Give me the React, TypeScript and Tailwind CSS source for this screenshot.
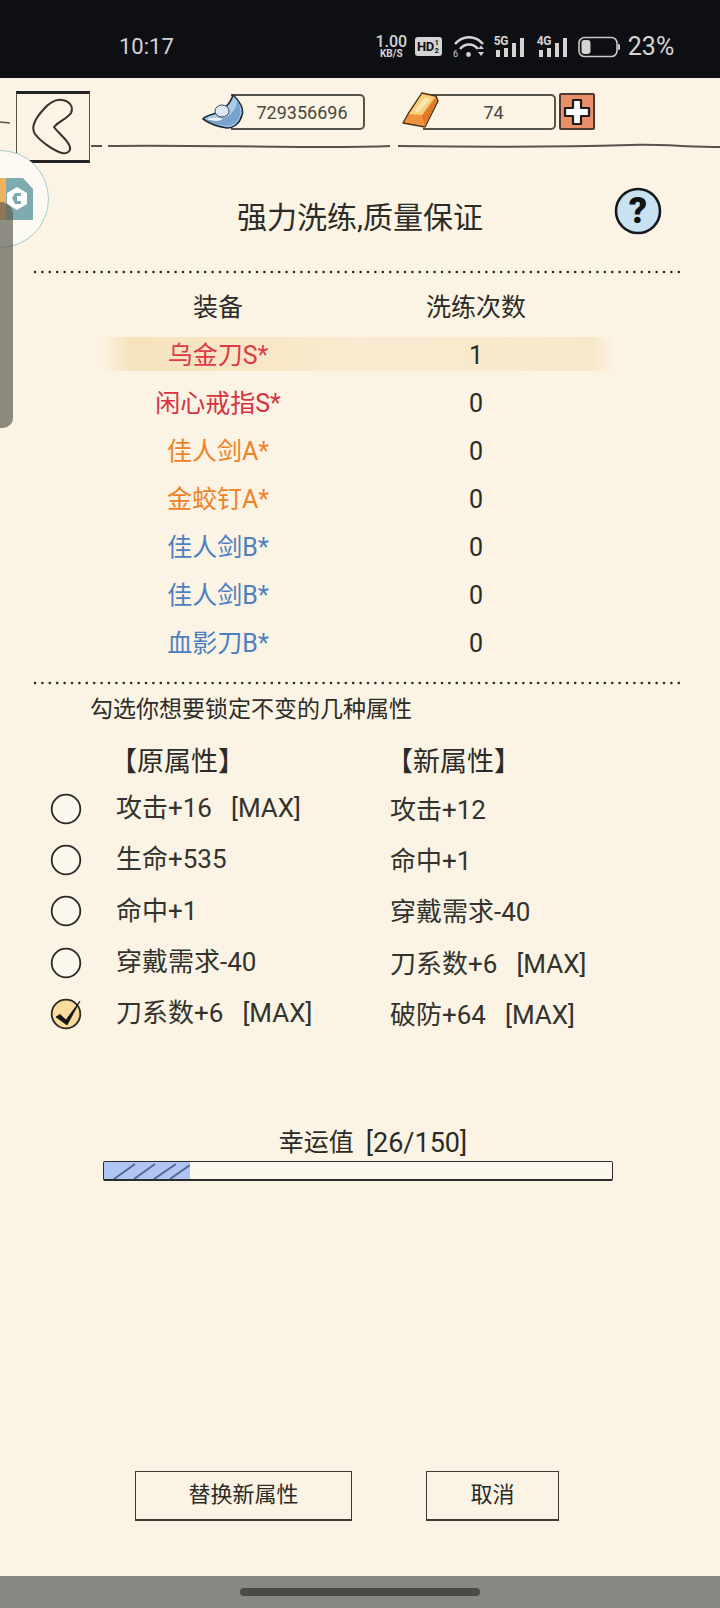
const FONT = "font-['Roboto','Noto_Sans_CJK_SC',sans-serif]";

const EQUIPMENT = [
  { name: "乌金刀S*", count: 1, color: "text-[#dc3a48]", active: true },
  { name: "闲心戒指S*", count: 0, color: "text-[#d8313f]" },
  { name: "佳人剑A*", count: 0, color: "text-[#ee8229]" },
  { name: "金蛟钉A*", count: 0, color: "text-[#ee8229]" },
  { name: "佳人剑B*", count: 0, color: "text-[#4d80bf]" },
  { name: "佳人剑B*", count: 0, color: "text-[#4d80bf]" },
  { name: "血影刀B*", count: 0, color: "text-[#4d80bf]" },
];

const ATTRS = [
  { oldText: "攻击+16", oldMax: true, newText: "攻击+12", newMax: false, checked: false },
  { oldText: "生命+535", oldMax: false, newText: "命中+1", newMax: false, checked: false },
  { oldText: "命中+1", oldMax: false, newText: "穿戴需求-40", newMax: false, checked: false },
  { oldText: "穿戴需求-40", oldMax: false, newText: "刀系数+6", newMax: true, checked: false },
  { oldText: "刀系数+6", oldMax: true, newText: "破防+64", newMax: true, checked: true },
];

function Signal({ label }: { label: string }) {
  return (
    <div className="relative w-[31px] h-[20px]">
      <span className="absolute left-0 top-[-2px] text-[12px] font-bold leading-[12px] tracking-[-0.5px] text-[#d4d4d4]">
        {label}
      </span>
      <svg width="31" height="20" viewBox="0 0 31 20" className="absolute left-0 top-0">
        <rect x="2" y="13" width="4" height="7" fill="#d4d4d4" />
        <rect x="10" y="11" width="4" height="9" fill="#d4d4d4" />
        <rect x="18" y="6" width="4" height="14" fill="#d4d4d4" />
        <rect x="26" y="1" width="4" height="19" fill="#d4d4d4" />
      </svg>
    </div>
  );
}

function StatusBar() {
  return (
    <div className="h-[78px] shrink-0 bg-[#0e0f13] flex items-center text-[#d4d4d4] pt-[15px]">
      <span className="ml-[119px] text-[22px] leading-none">10:17</span>
      <div className="ml-[202px] w-[31px] flex flex-col items-center">
        <span className="text-[16px] leading-[14px] font-medium">1.00</span>
        <span className="text-[10px] leading-[10px] font-bold">KB/S</span>
      </div>
      <div className="ml-[8px] w-[27px] h-[19px] rounded-[3px] bg-[#d4d4d4] flex items-center justify-center text-[#0e0f13] text-[13px] font-bold leading-none tracking-[-0.5px]">
        HD<span className="text-[7px] leading-[8px] w-[6px] text-center">1 2</span>
      </div>
      <svg width="32" height="22" viewBox="0 0 32 22" className="ml-[11px]" fill="none" stroke="#d4d4d4" strokeWidth="2.6">
        <path d="M2 8 C10 -1 22 -1 30 8" />
        <path d="M7 13 C12 7 20 7 25 13" />
        <circle cx="15.5" cy="18.5" r="2.4" fill="#d4d4d4" stroke="none" />
        <path d="M26 13 L29 9.5 L32 13 Z M26 16 L29 20 L32 16 Z" fill="#d4d4d4" stroke="none" transform="translate(-1 0)" />
        <text x="0" y="21" fontSize="9" fill="#d4d4d4" stroke="none">6</text>
      </svg>
      <div className="ml-[9px]"><Signal label="5G" /></div>
      <div className="ml-[12px]"><Signal label="4G" /></div>
      <svg width="42" height="22" viewBox="0 0 42 22" className="ml-[10px]" fill="none">
        <rect x="1" y="1.5" width="38" height="19" rx="5.5" stroke="#c9c9c9" strokeWidth="1.6" />
        <rect x="3.5" y="4" width="9" height="14" rx="3" fill="#d4d4d4" />
        <rect x="40" y="8" width="2" height="6" rx="1" fill="#c9c9c9" />
      </svg>
      <span className="ml-[8px] text-[25px] leading-none">23%</span>
    </div>
  );
}

function CurrencyPill({ value, className }: { value: string; className: string }) {
  return (
    <div className={`h-[36px] flex items-center justify-center border-y-2 border-r-2 border-[#55544c] rounded-r-[5px] text-[18px] text-[#47473f] pl-[10px] ${className}`}>
      {value}
    </div>
  );
}

function Header() {
  return (
    <div className="relative h-[92px] shrink-0">
      <svg width="720" height="92" viewBox="0 0 720 92" className="absolute left-0 top-0" fill="none" stroke="#55544c">
        <path d="M0 44 L10 45" strokeWidth="1.6" />
        <path d="M91 68 L102 68 M108 68 C180 67 250 69 320 69 C350 69 370 69 390 68 M398 68 C480 69 560 69 630 67 C660 66 690 69 720 69" strokeWidth="2" />
      </svg>
      <div className="relative flex items-start pt-[13px] pl-[16px]">
        <div className="relative w-[74px] h-[72px] border border-[#55544c] border-t-[3px] border-t-[#222] border-b-[3px] border-b-[#222] bg-[#fbf3e3]">
          <svg width="74" height="72" viewBox="0 0 74 72" className="absolute left-[-1px] top-[-3px]" fill="none" stroke="#33322d" strokeWidth="2">
            <path d="M27 19 C33 12 40 8 46 9 C53 10 58 15 55 22 C52 27 42 31 38 36 C42 42 52 49 54 56 C55 61 50 63 46 62 C38 60 24 50 19 43 C15 37 18 29 27 19Z" />
          </svg>
        </div>
        {/* silver ingot */}
        <div className="ml-[112px] mt-[3px] w-[164px] h-[36px] flex items-center relative">
          <svg width="42" height="38" viewBox="0 0 42 38" className="absolute left-0 top-[-1px] z-10">
            <path d="M31 2 C38 8 42 16 40 22 C38 30 32 35 25 35 C18 34 8 31 1 26 C3 23 9 22 14 20 C20 18 28 12 31 2Z" fill="#a9cbe8" stroke="#1f2a38" strokeWidth="1.6" strokeLinejoin="round" />
            <path d="M3 26 C10 24 16 24 22 25 C30 22 35 15 35 7 C38 12 39 18 38 22 C36 29 31 33 25 33 C17 32 9 30 3 26Z" fill="#78a3cd" />
            <path d="M4 26 C10 24 16 24 21 26 C17 29 10 28 4 26Z" fill="#eef4fa" />
            <ellipse cx="20" cy="18" rx="7" ry="6" fill="#dce9f4" stroke="#3a4a5a" strokeWidth="1" />
          </svg>
          <CurrencyPill value="729356696" className="ml-[29px] w-[134px]" />
        </div>
        {/* gold bar */}
        <div className="ml-[35px] mt-[3px] w-[155px] h-[36px] flex items-center relative">
          <svg width="40" height="38" viewBox="0 0 40 38" className="absolute left-[-1px] top-[-2px] z-10">
            <path d="M22 1 L36 4 L38 9 L25 35 L3 31 L8 22Z" fill="#f0923f" stroke="#4d3517" strokeWidth="1.4" strokeLinejoin="round" />
            <path d="M22 2 L35 5 L22 23 L9 22Z" fill="#f9cf7a" />
            <path d="M24 6 L30 7 L19 20 L14 19Z" fill="#fde6ad" />
            <path d="M36 6 L37 9 L25 34 L22 24Z" fill="#dd7a2a" />
          </svg>
          <CurrencyPill value="74" className="ml-[22px] w-[133px]" />
        </div>
        <div className="ml-[3px] mt-[2px] w-[36px] h-[37px] bg-[#e98f6b] border-2 border-[#4d3a30] rounded-[2px] flex items-center justify-center relative">
          <svg width="28" height="28" viewBox="0 0 28 28">
            <path d="M10 2 H18 V10 H26 V18 H18 V26 H10 V18 H2 V10 H10Z" fill="#fff" stroke="#1e1a18" strokeWidth="2.2" strokeLinejoin="round" />
          </svg>
        </div>
      </div>
    </div>
  );
}

function DottedLine({ className }: { className: string }) {
  return (
    <div className={`pl-[34px] ${className}`}>
      <svg width="650" height="4" viewBox="0 0 650 4" className="block">
        <line x1="1" y1="2" x2="649" y2="2" stroke="#2a2a26" strokeWidth="2.6" strokeLinecap="round" strokeDasharray="0 7.4" />
      </svg>
    </div>
  );
}

function Radio({ checked }: { checked: boolean }) {
  return (
    <svg width="34" height="34" viewBox="0 0 34 34" className="shrink-0 overflow-visible">
      <circle cx="17" cy="17" r="14.3" fill={checked ? "#f9dc9b" : "#fdf8ee"} stroke="#2a2a26" strokeWidth="1.8" />
      {checked && <path d="M7 20 L11 17.5 L17 23 L31 4 L18 28 Z" fill="#161616" stroke="#161616" strokeWidth="0.8" strokeLinejoin="round" />}
    </svg>
  );
}

function AttrText({ text, max }: { text: string; max: boolean }) {
  return (
    <span className="relative top-[1px] text-[26px] leading-none text-[#33332e] whitespace-pre">
      {text}
      {max && <span className="ml-[19px]">[MAX]</span>}
    </span>
  );
}

function FloatingBall() {
  return (
    <>
      <div className="absolute left-[-49px] top-[150px] w-[98px] h-[98px] rounded-full border-[1.5px] border-[#a2cdc8] bg-[#fdfaf4] flex items-center justify-end pr-[14px]">
        <svg width="36" height="44" viewBox="0 0 36 44">
          <path d="M8 1 L25 1 L35 12 L35 43 L8 43Z" fill="#7eabb0" />
          <path d="M0 1 L8 1 L8 43 L0 43Z" fill="#f0b45f" />
          <path d="M19 10 L29 16 L29 27 L19 33 L9 27 L9 16Z" fill="#fff" />
          <path d="M23 16 L17 16 L14 21 L17 27 L23 27 L23 24 L19 24 L19 19 L23 19Z" fill="#7eabb0" />
        </svg>
      </div>
      <div className="absolute left-0 top-[202px] w-[13px] h-[226px] bg-[#5f5d50]/70 rounded-tr-[12px] rounded-br-[10px]" />
    </>
  );
}

export default function App() {
  return (
    <div className={`${FONT} relative w-[720px] h-[1608px] overflow-hidden bg-[#fbf3e3] flex flex-col text-[#2b2b27]`}>
      <StatusBar />
      <Header />

      <div className="h-[96px] shrink-0 grid grid-cols-[1fr_auto_1fr] items-center">
        <div />
        <h1 className="text-[30px] leading-none font-normal">强力洗练,质量保证</h1>
        <div className="flex justify-end pr-[58px] pb-[14px]">
          <svg width="48" height="48" viewBox="0 0 48 48">
            <circle cx="24" cy="24" r="22" fill="#c9e2f1" stroke="#15191d" strokeWidth="2.6" />
            <text x="24" y="36" textAnchor="middle" fontSize="36" fontWeight="900" fontFamily="Roboto" fill="#111">?</text>
          </svg>
        </div>
      </div>

      <DottedLine className="h-[16px] pt-[4px] shrink-0" />

      <div className="ml-[100px] w-[516px] grid grid-cols-[236px_1fr] h-[48px] pt-[3px] items-center text-[25px] text-center shrink-0">
        <span>装备</span>
        <span>洗练次数</span>
      </div>

      {EQUIPMENT.map((item, i) => (
        <div key={i} className="h-[48px] flex items-center shrink-0">
          <div
            className={`ml-[100px] w-[516px] h-[34px] grid grid-cols-[236px_1fr] items-center text-center text-[25px] ${
              item.active ? "bg-[linear-gradient(90deg,transparent,#f6e2bc_6%,#f9ebd0_50%,#f8e8cb_95%,transparent)]" : ""
            }`}
          >
            <span className={item.color}>{item.name}</span>
            <span>{item.count}</span>
          </div>
        </div>
      ))}

      <DottedLine className="h-[32px] pt-[15px] shrink-0" />

      <div className="h-[24px] shrink-0 pl-[90px] flex items-center text-[23px] whitespace-nowrap">勾选你想要锁定不变的几种属性</div>

      <div className="mt-[20px] h-[36px] shrink-0 grid grid-cols-[276px_1fr] pl-[110px] items-center text-[27px]">
        <span>【原属性】</span>
        <span>【新属性】</span>
      </div>

      <div className="mt-[5px] shrink-0">
        {ATTRS.map((row) => (
          <div key={row.oldText} className="h-[51.3px] flex items-center pl-[49px]">
            <Radio checked={row.checked} />
            <div className="ml-[33px] w-[274px]">
              <AttrText text={row.oldText} max={row.oldMax} />
            </div>
            <AttrText text={row.newText} max={row.newMax} />
          </div>
        ))}
      </div>

      <div className="mt-[88.5px] h-[30px] shrink-0 flex items-center justify-center pl-[26px] text-[25px] whitespace-pre">
        幸运值<span className="ml-[12px] text-[27px]">[26/150]</span>
      </div>

      <div className="mt-[3px] ml-[103px] w-[510px] h-[20px] shrink-0 border-[1.5px] border-b-2 border-[#2b2b27] rounded-[2px] bg-[#fdf8ee] overflow-hidden">
        <svg width="86" height="17" viewBox="0 0 86 17" className="block">
          <rect width="86" height="17" fill="#afc5f5" />
          <path d="M10 17 L31 2 M30 17 L51 2 M50 17 L72 2 M66 17 L86 3" stroke="#566a8c" strokeWidth="2" />
        </svg>
      </div>

      <div className="mt-[290px] ml-[135px] shrink-0 flex gap-[74px]">
        <button type="button" className="w-[217px] h-[50px] border-[1.5px] border-b-2 border-[#3a3a35] text-[22px] leading-none">替换新属性</button>
        <button type="button" className="w-[133px] h-[50px] border-[1.5px] border-b-2 border-[#3a3a35] text-[22px] leading-none">取消</button>
      </div>

      <div className="mt-auto h-[32px] shrink-0 bg-[#878681] flex items-center justify-center">
        <div className="w-[240px] h-[8px] rounded-full bg-[#4b4a45]" />
      </div>

      <FloatingBall />
    </div>
  );
}
